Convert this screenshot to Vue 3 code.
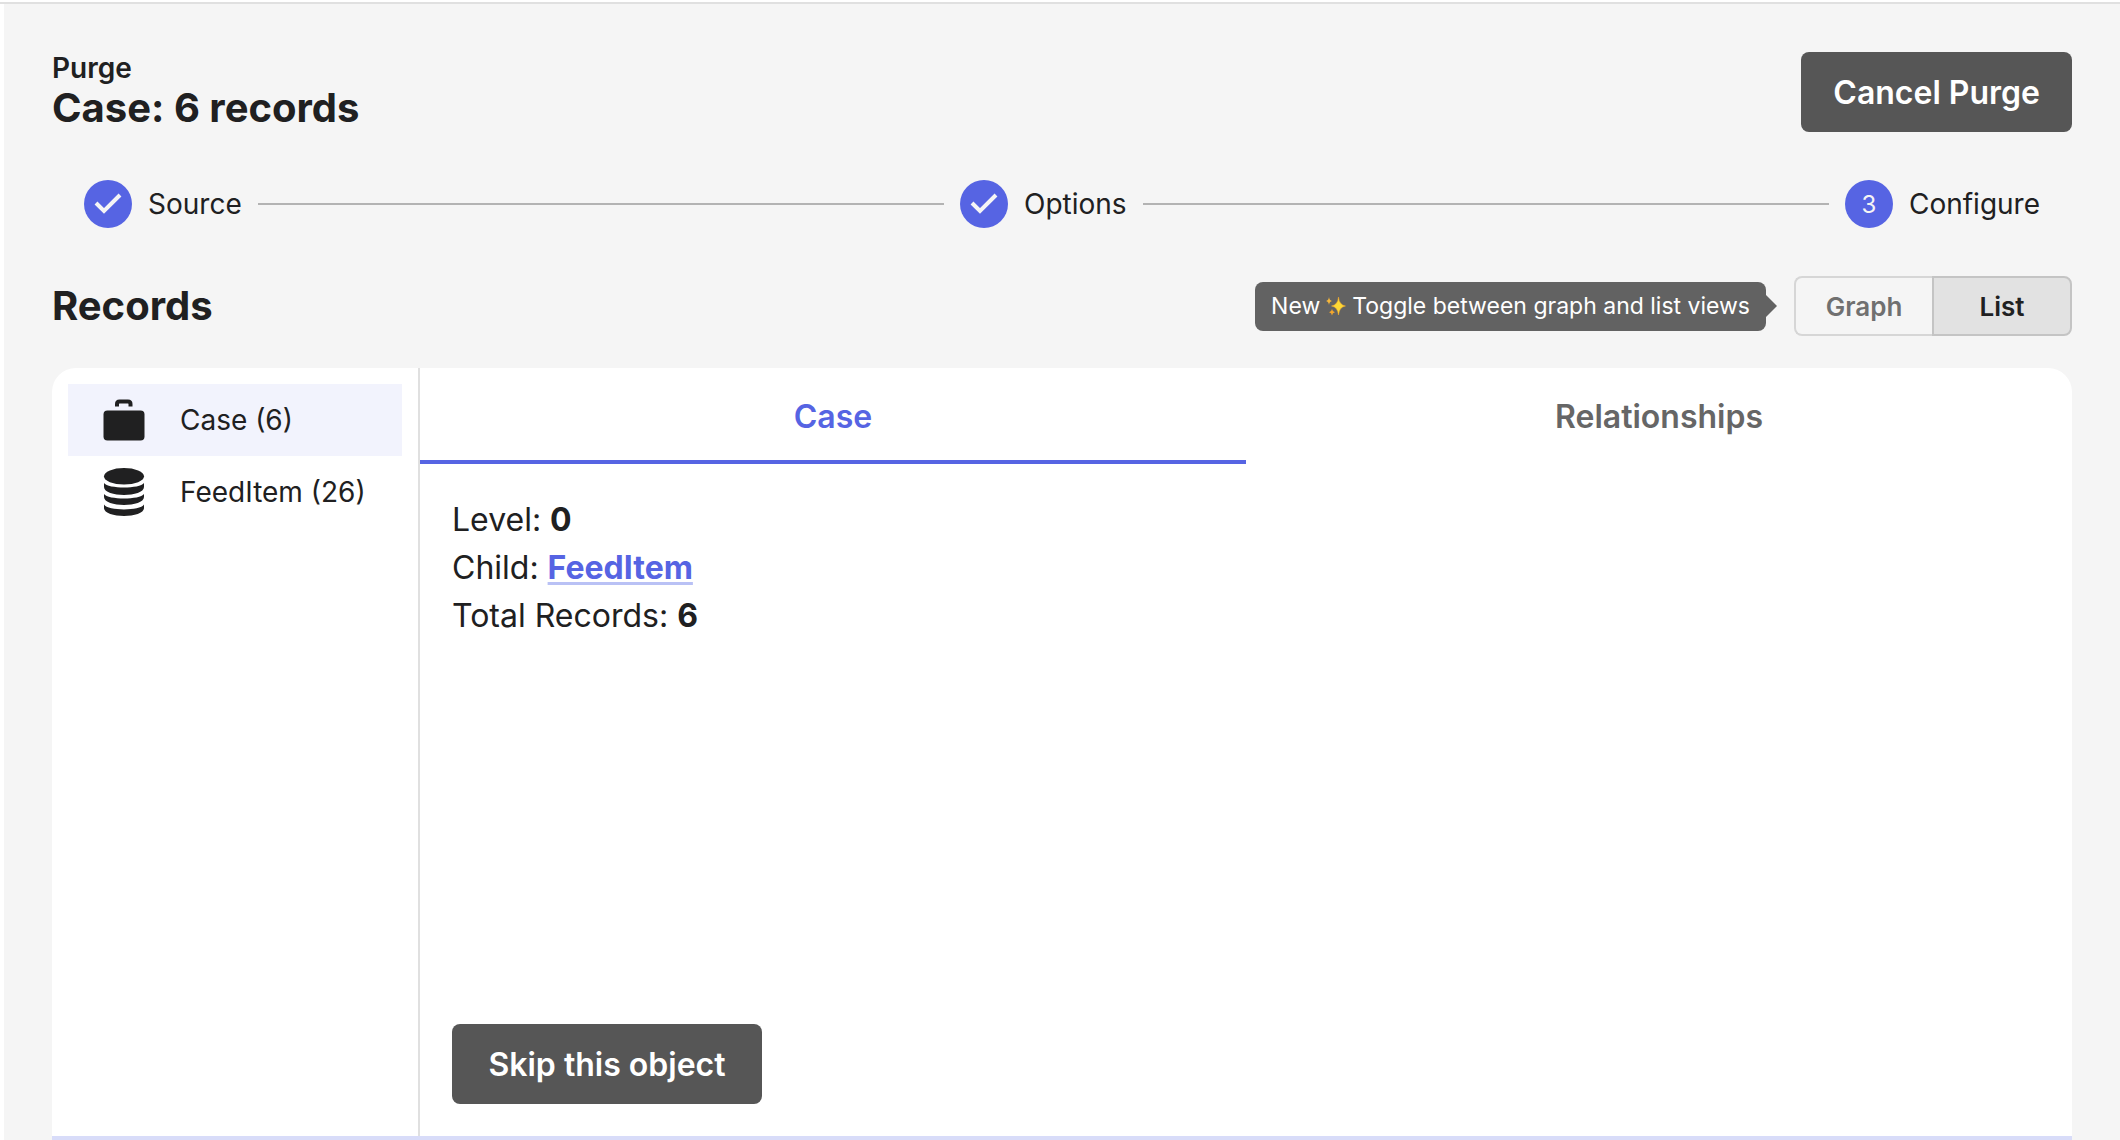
<script setup>
import { ref } from 'vue'

const steps = [
  { label: 'Source', done: true },
  { label: 'Options', done: true },
  { label: 'Configure', done: false },
]

const objects = [
  { name: 'Case', count: 6, icon: 'case' },
  { name: 'FeedItem', count: 26, icon: 'database' },
]

const views = ['Graph', 'List']
const tabs = ['Case', 'Relationships']

const view = ref('List')
const tab = ref('Case')
const selected = ref('Case')
</script>

<template>
  <main class="page">
    <header class="header">
      <div>
        <p class="eyebrow">Purge</p>
        <h1 class="title">Case: 6 records</h1>
      </div>
      <button class="button" type="button">Cancel Purge</button>
    </header>

    <ol class="stepper">
      <li v-for="(step, i) in steps" :key="step.label" class="step">
        <span class="step-icon">
          <svg v-if="step.done" viewBox="0 0 48 48" width="48" height="48" aria-hidden="true">
            <path d="M12 23 L20 31 L36 15" fill="none" stroke="#f5f5f5" stroke-width="4" />
          </svg>
          <template v-else>{{ i + 1 }}</template>
        </span>
        <span class="step-label">{{ step.label }}</span>
      </li>
    </ol>

    <div class="section-head">
      <h2 class="title">Records</h2>
      <div class="view-switch">
        <div class="tooltip" role="tooltip">
          <span>New</span>
          <svg class="sparkles" viewBox="0 0 20 20" width="20" height="20" aria-hidden="true">
            <path d="M12.5 1 Q13.2 9 19.5 10 Q13.2 11 12.5 19 Q11.8 11 5.5 10 Q11.8 9 12.5 1Z" fill="#fdd835" stroke="#f4a72c" stroke-width=".5" />
            <path d="M3 1 Q3.4 4.4 6 5 Q3.4 5.600 3 9 Q2.600 5.600 0 5 Q2.600 4.400 3 1Z" fill="#f6b73c" />
            <path d="M6 13 Q6.400 15.700 9 16.200 Q6.400 16.700 6 19.500 Q5.600 16.700 3 16.200 Q5.600 15.700 6 13Z" fill="#f4a72c" />
          </svg>
          <span>Toggle between graph and list views</span>
        </div>
        <div class="toggle" role="group" aria-label="View">
          <button
            v-for="name in views"
            :key="name"
            type="button"
            class="toggle-button"
            :class="{ active: view === name }"
            :aria-pressed="view === name"
            @click="view = name"
          >{{ name }}</button>
        </div>
      </div>
    </div>

    <section class="card">
      <nav class="sidebar" aria-label="Objects">
        <button
          v-for="item in objects"
          :key="item.name"
          type="button"
          class="object"
          :class="{ active: selected === item.name }"
          @click="selected = item.name"
        >
          <svg v-if="item.icon === 'case'" viewBox="0 0 48 48" width="48" height="48" aria-hidden="true">
            <path d="M17 10.500 V8 Q17 5.500 19.500 5.500 H28 Q30.500 5.500 30.500 8 V10.500" fill="none" stroke="#202021" stroke-width="4" />
            <rect x="3.500" y="14.500" width="41" height="30" rx="4" fill="#202021" />
          </svg>
          <svg v-else viewBox="0 0 48 48" width="48" height="48" aria-hidden="true">
            <g fill="#202021">
              <ellipse cx="24" cy="8.300" rx="20" ry="8.300" />
              <path d="M4 15 C8 21 40 21 44 15 V19 C44 29.500 4 29.500 4 19Z" />
              <path d="M4 26 C8 32 40 32 44 26 V29 C44 39.500 4 39.500 4 29Z" />
              <path d="M4 36.500 C8 43 40 43 44 36.500 V40 C44 50.500 4 50.500 4 40Z" />
            </g>
          </svg>
          <span>{{ item.name }} ({{ item.count }})</span>
        </button>
      </nav>

      <div class="detail">
        <div class="tabs" role="tablist">
          <button
            v-for="name in tabs"
            :key="name"
            type="button"
            role="tab"
            class="tab"
            :class="{ active: tab === name }"
            :aria-selected="tab === name"
            @click="tab = name"
          >{{ name }}</button>
        </div>
        <div class="panel" role="tabpanel">
          <div class="facts">
            <p>Level: <b>0</b></p>
            <p>Child: <a href="#feeditem">FeedItem</a></p>
            <p>Total Records: <b>6</b></p>
          </div>
          <button class="button button-wide" type="button">Skip this object</button>
        </div>
      </div>
    </section>
    <div class="footer-line"></div>
  </main>
</template>

<style>
body {
  background: #fff;
}
</style>

<style scoped>
.page {
  box-sizing: border-box;
  display: flex;
  flex-direction: column;
  min-height: calc(100vh - 2px);
  margin-top: 2px;
  padding: 48px 48px 0 52px;
  border-top: 2px solid #e0e0e0;
  background: linear-gradient(to right, #fff 4px, #f5f5f5 4px);
  color: #202021;
  font-family: Inter, sans-serif;
}

p,
h1,
h2,
ol {
  margin: 0;
  padding: 0;
}

button {
  margin: 0;
  border: 0;
  font-family: inherit;
  cursor: pointer;
}

svg {
  display: block;
  flex: none;
}

.header,
.section-head {
  display: flex;
  align-items: center;
  justify-content: space-between;
}

.eyebrow {
  font-size: 28px;
  font-weight: 600;
  line-height: 32px;
}

.title {
  font-size: 40px;
  font-weight: 700;
  line-height: 48px;
}

.button {
  height: 80px;
  padding: 0 32px;
  border-radius: 8px;
  background: #565656;
  color: #fff;
  font-size: 32px;
  font-weight: 600;
}

.button-wide {
  min-width: 310px;
}

.stepper {
  display: flex;
  margin: 48px 0;
  padding: 0 32px;
  list-style: none;
}

.step {
  display: flex;
  align-items: center;
  gap: 16px;
}

.step:not(:last-child) {
  flex: 1 1 auto;
}

.step:not(:last-child)::after {
  content: '';
  flex: 1;
  height: 2px;
  margin-right: 16px;
  background: #b3b3b3;
}

.step-icon {
  display: flex;
  flex: none;
  align-items: center;
  justify-content: center;
  width: 48px;
  height: 48px;
  border-radius: 50%;
  background: #5664e3;
  color: #f5f5f5;
  font-size: 24px;
}

.step-label {
  font-size: 28px;
  line-height: 40px;
}

.view-switch {
  display: flex;
  align-items: center;
  gap: 28px;
}

.tooltip {
  position: relative;
  display: flex;
  align-items: center;
  gap: 6px;
  height: 49px;
  padding: 0 16px;
  border-radius: 8px;
  background: #626262;
  color: #fff;
  font-size: 23px;
}

.tooltip::after {
  content: '';
  position: absolute;
  top: 50%;
  left: 100%;
  margin-top: -11px;
  border: 11px solid transparent;
  border-right: 0;
  border-left-color: #626262;
}

.toggle {
  display: flex;
}

.toggle-button {
  box-sizing: border-box;
  width: 138px;
  height: 60px;
  padding: 0;
  border: 2px solid #d6d6d6;
  border-right: 0;
  border-radius: 8px 0 0 8px;
  background: #f5f5f5;
  color: #707070;
  font-size: 26px;
  font-weight: 600;
}

.toggle-button:last-child {
  width: 140px;
  border-right: 2px solid #d6d6d6;
  border-radius: 0 8px 8px 0;
}

.toggle-button.active {
  border-color: #c4c4c4;
  background: #e2e2e2;
  color: #202021;
}

.card {
  display: flex;
  flex: 1;
  margin-top: 32px;
  border-radius: 24px 24px 0 0;
  background: #fff;
}

.sidebar {
  flex: none;
  box-sizing: border-box;
  width: 368px;
  padding: 16px;
  border-right: 2px solid #e0e0e0;
}

.object {
  display: flex;
  align-items: center;
  gap: 32px;
  width: 100%;
  height: 72px;
  padding: 0 32px;
  background: transparent;
  color: #202021;
  font-size: 28px;
  white-space: nowrap;
}

.object.active {
  background: #f2f3fd;
}

.detail {
  display: flex;
  flex: 1;
  flex-direction: column;
}

.tabs {
  display: flex;
}

.tab {
  flex: 1;
  box-sizing: border-box;
  height: 96px;
  padding: 4px 0 0;
  border-bottom: 4px solid transparent;
  background: transparent;
  color: #666;
  font-size: 32px;
  font-weight: 600;
}

.tab.active {
  border-bottom-color: #5664e3;
  color: #5664e3;
}

.panel {
  display: flex;
  flex: 1;
  flex-direction: column;
  align-items: flex-start;
  justify-content: space-between;
  padding: 32px;
}

.facts {
  font-size: 32px;
  line-height: 48px;
}

.facts a {
  color: #5664e3;
  font-weight: 700;
  text-decoration: underline;
  text-decoration-color: #b9c1f5;
  text-decoration-thickness: 3px;
  text-underline-offset: 3px;
}

.footer-line {
  height: 4px;
  background: #d8dcf9;
}
</style>
